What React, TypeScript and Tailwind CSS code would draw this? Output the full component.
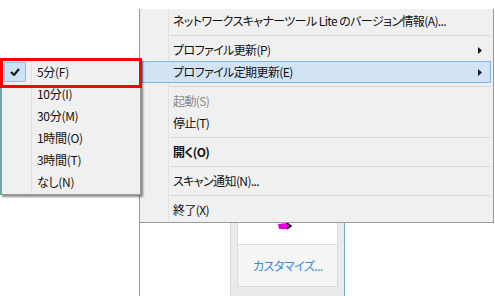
import React from "react";

const font = { fontFamily: '"Meiryo UI", "Noto Sans CJK JP", "Noto Sans", sans-serif' };

type Item =
  | { kind: "sep" }
  | { kind: "item"; label: string; sub?: boolean; active?: boolean; disabled?: boolean; bold?: boolean };

const mainItems: Item[] = [
  { kind: "item", label: "ネットワークスキャナーツール Lite のバージョン情報(A)..." },
  { kind: "sep" },
  { kind: "item", label: "プロファイル更新(P)", sub: true },
  { kind: "item", label: "プロファイル定期更新(E)", sub: true, active: true },
  { kind: "sep" },
  { kind: "item", label: "起動(S)", disabled: true },
  { kind: "item", label: "停止(T)" },
  { kind: "sep" },
  { kind: "item", label: "開く(O)", bold: true },
  { kind: "sep" },
  { kind: "item", label: "スキャン通知(N)..." },
  { kind: "sep" },
  { kind: "item", label: "終了(X)" },
];

const subItems = ["5分(F)", "10分(I)", "30分(M)", "1時間(O)", "3時間(T)", "なし(N)"];

function Arrow() {
  return (
    <svg width="4" height="7" viewBox="0 0 4 7" className="absolute right-[11px] top-[8px]">
      <path d="M0 0 L4 3.5 L0 7 Z" fill="#1a1a1a" />
    </svg>
  );
}

function MainMenu() {
  return (
    <div className="absolute left-[139px] top-[9px] w-[355px] border-x border-b border-[#9a9a9a] bg-[#f0f0f0] py-[1px]">
      {mainItems.map((it, i) =>
        it.kind === "sep" ? (
          <div key={i} className="flex h-[7px]">
            <div className="w-[29px] border-r border-[#e2e2e2]" />
            <div className="flex flex-1 items-center pl-[1px] pr-[2px]">
              <div className="h-[1px] w-full bg-[#d7d7d7]" />
            </div>
          </div>
        ) : (
          <div key={i} className="relative flex h-[22px]">
            {it.active && (
              <div className="absolute inset-y-0 left-[2px] right-[2px] border border-[#84b4e6] bg-[#d1e3f5]" />
            )}
            <div className={`relative w-[29px] ${it.active ? "" : "border-r border-[#e2e2e2]"}`} />
            <div
              className={`relative flex items-center pl-[4px] text-[12px] tracking-[-0.6px] [font-feature-settings:'palt'] ${
                it.disabled ? "text-[#8a8a8a]" : "text-[#111]"
              } ${it.bold ? "font-bold" : ""}`}
            >
              {it.label}
            </div>
            {it.sub && <Arrow />}
          </div>
        )
      )}
    </div>
  );
}

function SubMenu() {
  return (
    <div className="absolute left-0 top-[59px] w-[141px] border border-l-2 border-[#9a9a9a] border-l-[#6fa9ad] bg-[#f0f0f0] py-[1px] shadow-[2px_2px_2px_rgba(0,0,0,0.45)]">
      {subItems.map((label, i) => (
        <div key={label} className="relative flex h-[22px]">
          <div className="relative flex w-[30px] items-center border-r border-[#e2e2e2] pl-[2px]">
            {i === 0 && (
              <div className="flex h-[20px] w-[22px] items-center justify-center border border-[#92c0ea] bg-[#cbe3f8]">
                <svg width="10" height="8" viewBox="0 0 10 8">
                  <path d="M1 4 L4 7 L9 1" fill="none" stroke="#1b1b1b" strokeWidth="2.2" />
                </svg>
              </div>
            )}
          </div>
          <div className="flex items-center pl-[5px] text-[12px] tracking-[-0.3px] text-[#111] [font-feature-settings:'palt']">
            {label}
          </div>
        </div>
      ))}
    </div>
  );
}

function BackWindow() {
  return (
    <div className="absolute left-[139px] top-[200px] h-[96px] w-[206px] border-x border-[#6fb0b3] bg-white">
      <div className="ml-[90px] h-full w-[114px] border-l border-[#d6d6d6] bg-[#ebebeb] px-[6px]">
        <div className="relative h-[45px] border-x border-b border-[#dcdcdc] bg-white">
          <svg width="14" height="7" viewBox="0 0 14 7" className="absolute left-[40px] top-[23px]">
            <path d="M0 1 L9 0 L13 3 L9 6 L1 6 Z" fill="#e000e0" />
            <path d="M9 0 L13 3 L9 6" fill="none" stroke="#111" strokeWidth="1.5" />
          </svg>
        </div>
        <div className="flex h-[42px] items-center border-x border-b border-[#dcdcdc] bg-[#f5f5f5] pl-[15px] text-[12px] tracking-[-0.5px] text-[#3c8ad6] [font-feature-settings:'palt']">
          カスタマイズ...
        </div>
      </div>
    </div>
  );
}

export default function App() {
  return (
    <div className="relative h-[296px] w-[495px] overflow-hidden bg-white" style={font}>
      <BackWindow />
      <MainMenu />
      <SubMenu />
      <div className="pointer-events-none absolute left-0 top-[58px] h-[30px] w-[142px] border-[3px] border-[#ff0000]" />
    </div>
  );
}
